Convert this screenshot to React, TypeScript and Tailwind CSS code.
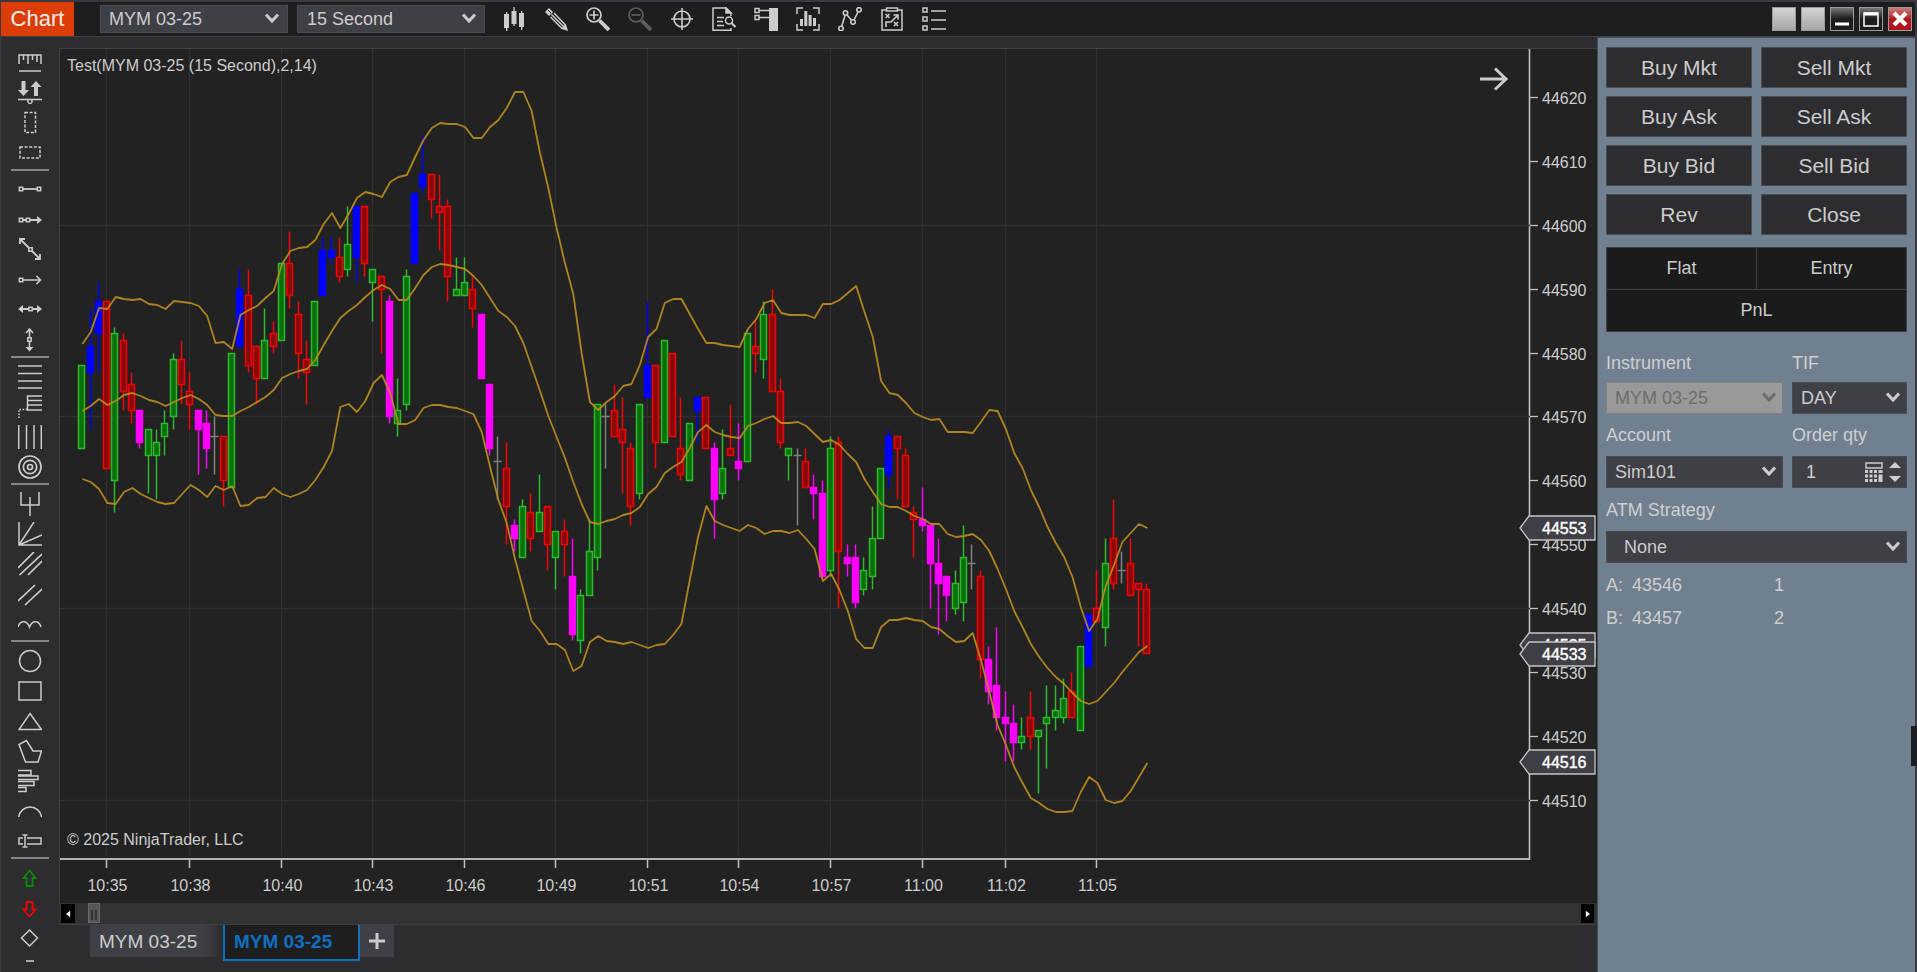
import type { ReactNode } from "react";

type Candle = [kind: "g" | "r" | "b" | "m" | "d", high: number, top: number, bottom: number, low: number];

// Prices are ticks above 44500: high, body top, body bottom, low.
const CANDLES: Candle[] = [
  ["g", 78, 78, 65, 65], ["b", 87, 81, 77, 68], ["b", 91, 88, 83, 77], ["r", 88, 88, 62, 62], ["g", 84, 83, 60, 55],
  ["r", 83, 82, 74, 71], ["r", 77, 75, 71, 69], ["m", 71, 71, 66, 65], ["g", 68, 68, 64, 58], ["g", 68, 66, 64, 57],
  ["g", 71, 69, 67, 64], ["g", 80, 79, 70, 68], ["r", 82, 79, 75, 72], ["r", 77, 74, 72, 68], ["m", 71, 71, 68, 61],
  ["m", 71, 69, 65, 62], ["d", 70, 67, 67, 61], ["r", 67, 67, 60, 56], ["g", 80, 80, 59, 59], ["b", 93, 90, 81, 81],
  ["r", 93, 89, 78, 77], ["r", 81, 81, 76, 72], ["g", 87, 82, 76, 76], ["r", 85, 83, 81, 80], ["g", 94, 94, 82, 82],
  ["r", 99, 94, 89, 87], ["r", 88, 86, 80, 76], ["r", 82, 79, 77, 72], ["g", 88, 88, 78, 78], ["b", 98, 96, 89, 89],
  ["b", 98, 96, 95, 94], ["r", 98, 95, 92, 91], ["g", 103, 97, 93, 92], ["b", 103, 103, 95, 91], ["r", 103, 103, 94, 92],
  ["g", 93, 93, 91, 85], ["r", 92, 92, 90, 80], ["m", 89, 88, 70, 69], ["g", 76, 71, 69, 67], ["g", 93, 92, 72, 71],
  ["b", 105, 105, 94, 94], ["b", 114, 108, 106, 105], ["r", 108, 108, 104, 101], ["r", 108, 103, 102, 96], ["r", 104, 103, 92, 88],
  ["g", 95, 90, 89, 89], ["g", 95, 91, 89, 89], ["r", 92, 90, 87, 84], ["m", 86, 86, 76, 76], ["m", 75, 75, 65, 64],
  ["d", 67, 63, 63, 57], ["r", 66, 62, 56, 50], ["m", 54, 53, 51, 49], ["g", 57, 56, 48, 48], ["r", 58, 55, 51, 49],
  ["g", 61, 55, 52, 52], ["r", 56, 56, 50, 46], ["g", 52, 52, 48, 43], ["r", 54, 52, 50, 45], ["m", 51, 45, 36, 35],
  ["g", 43, 42, 35, 33], ["g", 54, 49, 42, 42], ["g", 72, 72, 48, 46], ["d", 72, 70, 70, 62], ["r", 75, 71, 67, 67],
  ["r", 73, 68, 66, 58], ["r", 66, 65, 56, 53], ["g", 72, 72, 58, 57], ["b", 88, 78, 73, 73], ["r", 78, 78, 66, 62],
  ["g", 82, 82, 66, 66], ["r", 80, 80, 67, 67], ["r", 73, 65, 61, 60], ["g", 69, 69, 60, 60], ["b", 73, 73, 71, 66],
  ["r", 73, 73, 65, 65], ["m", 66, 65, 57, 51], ["g", 68, 62, 58, 57], ["r", 72, 65, 64, 64], ["m", 69, 63, 62, 60],
  ["g", 83, 83, 63, 63], ["r", 85, 81, 80, 77], ["g", 88, 86, 79, 76], ["r", 90, 86, 74, 74], ["r", 76, 74, 66, 65],
  ["g", 65, 65, 64, 60], ["d", 65, 64, 64, 53], ["r", 65, 63, 59, 59], ["m", 61, 59, 58, 54], ["m", 60, 58, 45, 45],
  ["g", 67, 65, 46, 45], ["r", 67, 66, 49, 40], ["m", 50, 48, 47, 45], ["m", 50, 48, 41, 40], ["g", 48, 46, 43, 42],
  ["g", 56, 51, 45, 43], ["g", 62, 62, 51, 51], ["b", 68, 67, 61, 59], ["r", 67, 67, 65, 57], ["r", 65, 64, 56, 56],
  ["r", 56, 55, 54, 48], ["m", 59, 54, 53, 52], ["m", 53, 53, 47, 40], ["m", 51, 47, 44, 36], ["m", 45, 45, 42, 38],
  ["g", 46, 44, 40, 39], ["g", 53, 48, 41, 38], ["d", 50, 47, 47, 43], ["r", 46, 45, 32, 29], ["m", 34, 32, 27, 25],
  ["m", 37, 28, 23, 21], ["m", 27, 23, 22, 16], ["m", 25, 22, 19, 16], ["g", 23, 20, 19, 18], ["r", 27, 23, 20, 18],
  ["g", 21, 21, 20, 11], ["g", 28, 23, 22, 15], ["g", 28, 24, 23, 21], ["g", 29, 26, 23, 22], ["r", 30, 27, 23, 23],
  ["g", 34, 34, 21, 21], ["b", 39, 39, 31, 31], ["r", 46, 40, 38, 38], ["g", 51, 47, 37, 34], ["r", 57, 51, 44, 43],
  ["d", 49, 46, 46, 44], ["r", 51, 47, 42, 42], ["r", 44, 44, 43, 34], ["r", 44, 43, 33, 33],
];

const UPPER = [
  344, 332, 308, 309, 297, 299, 300, 299, 304, 305, 309, 301, 302, 303, 306, 316, 343, 342, 349, 315, 310, 306, 298, 291, 264,
  251, 248, 247, 240, 224, 213, 228, 214, 198, 192, 194, 197, 182, 177, 175, 157, 140, 128, 123, 124, 124, 127, 138, 138, 127,
  120, 108, 92, 92, 111, 153, 188, 228, 263, 294, 353, 402, 410, 402, 396, 386, 384, 365, 337, 329, 303, 299, 299, 314, 329,
  343, 343, 345, 346, 347, 329, 319, 303, 300, 313, 315, 315, 315, 318, 304, 304, 300, 293, 286, 312, 337, 381, 393, 395, 403,
  413, 417, 420, 419, 432, 432, 432, 433, 422, 410, 411, 429, 453, 468, 490, 507, 527, 543, 557, 577, 607, 631, 619, 586, 565,
  542, 533, 524, 528,
];
const MIDDLE = [
  411, 406, 399, 405, 401, 395, 393, 396, 400, 402, 406, 402, 398, 395, 399, 405, 415, 416, 416, 411, 407, 402, 397, 390, 378,
  374, 371, 369, 360, 345, 331, 318, 311, 305, 297, 290, 285, 289, 300, 300, 288, 275, 267, 264, 265, 267, 269, 276, 285, 298,
  311, 317, 326, 343, 367, 391, 416, 437, 458, 482, 504, 522, 524, 521, 519, 515, 513, 507, 494, 487, 473, 467, 462, 448, 432,
  425, 432, 435, 437, 438, 426, 423, 419, 416, 423, 423, 422, 426, 434, 442, 440, 445, 454, 462, 479, 492, 504, 507, 507, 511,
  516, 519, 524, 524, 534, 537, 536, 534, 540, 551, 569, 589, 611, 627, 644, 657, 668, 677, 684, 693, 701, 704, 701, 692, 683,
  672, 662, 652, 646,
];
const LOWER = [
  479, 482, 489, 503, 504, 492, 488, 494, 498, 502, 504, 503, 494, 485, 490, 497, 486, 490, 486, 506, 505, 498, 497, 488, 494,
  497, 494, 490, 480, 467, 451, 407, 404, 412, 401, 383, 375, 393, 424, 424, 420, 408, 405, 405, 407, 408, 411, 414, 432, 467,
  500, 523, 559, 590, 621, 631, 644, 644, 650, 671, 666, 642, 636, 641, 642, 644, 642, 645, 648, 645, 644, 635, 624, 580, 537,
  506, 521, 525, 528, 531, 525, 528, 534, 531, 531, 533, 530, 539, 549, 581, 574, 590, 611, 639, 648, 648, 627, 620, 620, 618,
  620, 621, 627, 629, 636, 642, 641, 633, 660, 692, 725, 745, 767, 783, 798, 803, 809, 812, 812, 811, 792, 777, 783, 800, 803,
  801, 791, 777, 763,
];

const TIMES: [number, string][] = [
  [3, "10:35"], [13, "10:38"], [24, "10:40"], [35, "10:43"], [46, "10:46"], [57, "10:49"],
  [68, "10:51"], [79, "10:54"], [90, "10:57"], [101, "11:00"], [111, "11:02"], [122, "11:05"],
];
const PRICES = [120, 110, 100, 90, 80, 70, 60, 50, 40, 30, 20, 10];

const HEADER = 49;
const barX = (i: number) => Math.floor(21.7 + 8.32 * i) + 0.5;
const priceY = (p: number) => Math.floor(751.3 - (p - 10) * 6.39) + 0.5;
const linePoints = (ys: number[]) => ys.map((y, i) => `${22.4 + 8.32 * i},${y - HEADER}`).join(" ");

const STROKE = { g: "#2db82d", r: "#f80000", b: "#0000ff", m: "#ff00ff", d: "#808080" };
const FILL = { g: "#0a700a", r: "#860a0a", b: "#0000ff", m: "#ff00ff", d: "#808080" };

function Bars() {
  return (
    <g>
      {CANDLES.map(([kind, high, top, bottom, low], i) => {
        const x = barX(i);
        const color = STROKE[kind];
        return (
          <g key={i} stroke={color} strokeWidth={1.5}>
            {high > top && <line x1={x} x2={x} y1={priceY(high)} y2={priceY(top)} />}
            {low < bottom && <line x1={x} x2={x} y1={priceY(bottom)} y2={priceY(low)} />}
            {kind === "d" ? (
              <line x1={x - 4} x2={x + 4} y1={priceY(top)} y2={priceY(top)} />
            ) : (
              <rect x={x - 3} y={priceY(top)} width={6} height={priceY(bottom) - priceY(top)} fill={FILL[kind]} />
            )}
          </g>
        );
      })}
    </g>
  );
}

function Plot() {
  return (
    <svg className="block h-full w-full" aria-label="Price chart">
      <g stroke="#303030" strokeWidth={1.3}>
        {TIMES.map(([i]) => (
          <line key={i} x1={barX(i)} x2={barX(i)} y1={0} y2={806} />
        ))}
        {[100, 70, 40, 10].map((p) => (
          <line key={p} x1={0} x2="100%" y1={priceY(p)} y2={priceY(p)} />
        ))}
      </g>
      <Bars />
      <g fill="none" stroke="#b98b20" strokeWidth={1.8} strokeLinejoin="round" opacity={0.92}>
        <polyline points={linePoints(UPPER)} />
        <polyline points={linePoints(MIDDLE)} />
        <polyline points={linePoints(LOWER)} />
      </g>
    </svg>
  );
}

function PriceTag({ y, label }: { y: number; label: string }) {
  return (
    <g>
      <path d={`M-10 ${y}L-1 ${y - 12}H65V${y + 12}H-1Z`} fill="#3f3f46" stroke="#c4c4c4" strokeWidth={1.3} />
      <text x={12} y={y + 6} fill="#ffffff" stroke="#ffffff" strokeWidth={0.4}>{label}</text>
    </g>
  );
}

function PriceAxis() {
  return (
    <svg className="block h-full w-[67px] shrink-0 overflow-visible text-[16px]" aria-label="Price axis">
      <line x1={-0.5} x2={-0.5} y1={0} y2="100%" stroke="#c0c0c0" strokeWidth={1.6} />
      {PRICES.map((p) => (
        <g key={p}>
          <line x1={0} x2={8} y1={priceY(p)} y2={priceY(p)} stroke="#c0c0c0" strokeWidth={1.3} />
          <text x={12} y={priceY(p) + 6} fill="#cccccc">{44500 + p}</text>
        </g>
      ))}
      <PriceTag y={479} label="44553" />
      <PriceTag y={596} label="44535" />
      <PriceTag y={605} label="44533" />
      <PriceTag y={713} label="44516" />
    </svg>
  );
}

function TimeAxis() {
  return (
    <svg className="block h-[43px] w-full text-[16px]" aria-label="Time axis">
      {TIMES.map(([i, label]) => (
        <g key={i}>
          <line x1={barX(i)} x2={barX(i)} y1={0} y2={8} stroke="#c0c0c0" strokeWidth={1.5} />
          <text x={barX(i) + 1} y={31} fill="#cccccc" textAnchor="middle">{label}</text>
        </g>
      ))}
    </svg>
  );
}

function Chevron({ className = "" }: { className?: string }) {
  return (
    <svg viewBox="0 0 14 10" className={`pointer-events-none absolute h-[10px] w-[14px] ${className}`} aria-hidden="true">
      <path d="M1 1.5L7 8L13 1.5" fill="none" stroke="currentColor" strokeWidth={3} />
    </svg>
  );
}

function Dropdown({ label, value, box, text, chevron = "right-[7px] top-[10px]", disabled = false }: { label: string; value: string; box: string; text: string; chevron?: string; disabled?: boolean }) {
  return (
    <div className={`relative ${box}`}>
      <select
        aria-label={label}
        id={label}
        disabled={disabled}
        defaultValue={value}
        className={`h-full w-full appearance-none border text-[18px] outline-none disabled:opacity-100 ${text} ${
          disabled ? "border-[#808080] bg-[#999999] text-[#6d6d6d]" : "border-[#4b4b52] bg-[#3f3f46] text-[#cccccc]"
        }`}
      >
        <option>{value}</option>
      </select>
      <Chevron className={`${chevron} ${disabled ? "text-[#6d6d6d]" : "text-[#cccccc]"}`} />
    </div>
  );
}

function Icon({ children, className = "" }: { children: ReactNode; className?: string }) {
  return (
    <svg viewBox="0 0 24 24" className={`h-6 w-6 ${className}`} fill="none" stroke="currentColor" strokeWidth={1.5} aria-hidden="true">
      {children}
    </svg>
  );
}

const TOOLBAR: [string, ReactNode][] = [
  ["Chart style", <g fill="currentColor" stroke="none"><path d="M2 7h5v14H2zM9.500 4h5v13h-5zM17 6h5v14h-5z" /><path d="M4 5h1.300v19H4zM11.400 0h1.300v19h-1.300zM19 4h1.300v19H19z" /></g>],
  ["Drawing tools", <g><path d="M1 5L5 1L9 5L5 9Z" fill="currentColor" stroke="none" /><path d="M6.500 10L18 21.500M10 6L21.500 18M7.500 7.500L19.500 19.500" /><path d="M4 3L7 6" stroke="#1e1e1e" strokeWidth={1} /><path d="M24 24L21.800 16.800L16.800 21.800Z" fill="currentColor" stroke="none" /></g>],
  ["Zoom in", <g><circle cx="8" cy="8" r="7" strokeWidth={1.700} /><path d="M8 3.500V12.500M3.500 8H12.500" strokeWidth={1.700} /><path d="M13.500 13.500L23 23" strokeWidth={3.800} /></g>],
  ["Zoom out", <g><circle cx="8" cy="8" r="7" strokeWidth={1.700} /><path d="M3.500 8H12.500" strokeWidth={1.700} /><path d="M13.500 13.500L23 23" strokeWidth={3.800} /></g>],
  ["Cross hair", <g strokeWidth={1.600}><circle cx="12" cy="12" r="8" /><path d="M12 1V23M1 12H23" /></g>],
  ["Data box", <g><path d="M19 21V23.200H1V1H14L19 6V9" /><path d="M14 1V6H19Z" fill="currentColor" /><path d="M5 10.500H12M5 14.500H11M5 18.500H12" /><circle cx="17" cy="13.500" r="3.500" /><path d="M19.500 16L23.500 20" strokeWidth={2.200} /></g>],
  ["Chart trader", <g><path d="M15 1H24V24H15Z" fill="currentColor" stroke="none" /><path d="M1 1.500H5V5.500H1ZM1 8.500H5V12.500H1ZM5 3.500H15M5 10.500H15" /></g>],
  ["Data series", <g><path d="M1 7V1H7M17 1H23V7M23 17V23H17M7 23H1V17" /><path d="M4 12H7V19H4ZM8.300 4H11.300V19H8.300ZM12.600 8H15.600V19H12.600ZM17 11H20V19H17Z" fill="currentColor" stroke="none" /></g>],
  ["Indicators", <g strokeWidth={1.600}><circle cx="3" cy="21.500" r="2.200" /><circle cx="7.500" cy="6" r="2.200" /><circle cx="15" cy="15" r="2.200" /><circle cx="21" cy="2.800" r="2.200" /><path d="M3.700 19.200L7 8.400M9 8L13.600 13.200M16 13L20 5" /></g>],
  ["Strategies", <g><path d="M6 3H2V23H22V3H18" /><path d="M6.500 1H17.500V4H6.500Z" /><path d="M5.500 7L9.500 11M9.500 7L5.500 11M14 15L18 19M18 15L14 19" /><path d="M6 20V15H11L17 9M13.500 8H18V12.500" strokeWidth={1.600} /></g>],
  ["Properties", <g><path d="M1 1H5V5H1ZM1 10H5V14H1ZM1 19H5V23H1Z" /><path d="M9 4H24M9 13H24M9 22H24" /></g>],
];

const box = (x: number, y: number) => <rect x={x - 1.7} y={y - 1.7} width={3.4} height={3.4} />;
const solid = (d: string) => <path d={d} fill="currentColor" stroke="none" />;

const TOOLS: [string, ReactNode, string?][][] = [
  [
    ["Ruler", <g><path d="M1 13V4H23V13M1 20H23M5.500 4V9M10 4V13M14.500 4V9M19 4V11" /></g>],
    ["Risk reward", <g><path d="M0 18.500H24" /><path d="M10 18.500Q9.500 22.500 12 22.500Q14.500 22.500 14 18.500" />{solid("M3.5 0H7.500V9H11L5.500 15L0 9H3.500Z")}{solid("M16 15H20V6H23.500L18 0L12.500 6H16Z")}</g>],
    ["Region highlight X", <path d="M7 1.500H17.500V21.500H7Z" strokeDasharray="3 1.600" />],
    ["Region highlight Y", <path d="M2 6H22V17H2Z" strokeDasharray="3 1.600" />],
  ],
  [
    ["Line", <g>{box(3, 11)}{box(21, 11)}<path d="M5 11H19" strokeWidth={1.800} /></g>],
    ["Ray", <g>{box(3, 12)}{box(10, 12)}<path d="M5 12H8.500M12 12H20" strokeWidth={1.800} />{solid("M19 8L24 12L19 16Z")}</g>],
    ["Extended line", <g>{box(12.5, 11.5)}<path d="M3 2L11 10M14 13L21 20M2 6V1H7M22 16V21H17" strokeWidth={1.800} /></g>],
    ["Arrow line", <g>{box(3, 12)}<path d="M5 12H22M18.500 8L22.500 12L18.500 16" strokeWidth={1.600} /></g>],
    ["Horizontal line", <g>{box(12.5, 11)}<path d="M4 11H10.500M14.500 11H20" strokeWidth={1.800} />{solid("M0 11L5 7V15ZM24 11L19 7V15Z")}</g>],
    ["Vertical line", <g>{box(11.5, 11.5)}<path d="M11.500 2V9.500M11.500 13.500V20M8 5L11.500 1L15 5" strokeWidth={1.600} />{solid("M11.500 23.500L7.500 19H15.500Z")}</g>],
  ],
  [
    ["Fibonacci retracements", <path d="M0 1H24M0 8.500H24M0 16H24M0 23H24" />],
    ["Fibonacci extensions", <g><path d="M24 1H9.500V15H24M9.500 5.500H24M9.500 10H24" /><path d="M9 14.500H1V24" strokeDasharray="1.500 1.500" /></g>],
    ["Fibonacci time extensions", <path d="M.7 0V24M8.500 0V24M16 0V24M23.300 0V24" />],
    ["Fibonacci circle", <g strokeWidth={1.700}><circle cx="12" cy="12" r="11" /><circle cx="12" cy="12" r="6.700" /><circle cx="12" cy="12" r="2.500" /></g>],
  ],
  [
    ["Andrews pitchfork", <g><path d="M3 0V13H21V0" /><path d="M12 5V24" opacity={0.75} strokeWidth={2} /></g>],
    ["Gann fan", <path d="M1 0V23H24M1 23L16 0M1 23L24 13" />],
    ["Regression channel", <path d="M0 16L16 0M1.500 23L24 2M10 23L24 9" strokeWidth={1.700} />],
    ["Trend channel", <path d="M0 19L17 3M7 23L24 7" strokeWidth={1.700} />],
    ["Path", <path d="M0 15C2 8 9 8 11.500 15C14 8 21 8 23 15" />],
  ],
  [
    ["Ellipse", <circle cx="12" cy="12" r="10.500" />],
    ["Rectangle", <path d="M1 3H23V21H1Z" />],
    ["Triangle", <path d="M12 4.500L23.500 20.500H1Z" />],
    ["Polygon", <path d="M1 5.500L8.500 1.500L15 12H23.500L20 23H7.500Z" />],
    ["Volume profile", <path d="M0 1.500H13V6H0M0 7H20V10.500H0M0 12.500H16V16.500H0M0 18.500H8V22.500H0" />],
    ["Arc", <path d="M.700 18A11.500 11.500 0 0 1 23.500 18" />],
    ["Text", <g><path d="M5 9H1V15H5M9 9H23V15H9M7 6V18M4.500 6H9.500M4.500 18H9.500" /></g>],
  ],
  [
    ["Arrow up", <path d="M11.500 4.500L17.500 12H14.500V20H8.500V12H5.500Z" strokeWidth={1.800} />, "text-[#0a8a0a]"],
    ["Arrow down", <path d="M11.500 20.500L17.500 13.500H14.500V6H8.500V13.500H5.500Z" strokeWidth={1.800} />, "text-[#f00000]"],
    ["Diamond", <path d="M11.500 4L19.500 12L11.500 20L3.500 12Z" />],
  ],
];

function Caption({ children, htmlFor }: { children: ReactNode; htmlFor: string }) {
  return <label htmlFor={htmlFor} className="block text-[18px] leading-[22px] text-[#cfcfcf]">{children}</label>;
}

const WIN = "flex h-6 w-6 items-center justify-center border border-[#9a9a9a]";

export default function App() {
  return (
    <div className="flex h-screen flex-col overflow-hidden border-l border-r-2 border-t-2 border-[#3a3a40] bg-[#2d2d30] font-['Liberation_Sans',Arial,sans-serif] text-[#cccccc]">
      <header className="flex h-[35px] shrink-0 items-center border-b border-[#3f3f46] bg-[#1e1e1e]">
        <h1 className="flex h-full w-[73px] items-center justify-center bg-[#dc3c05] text-[22px] leading-none text-[#f0f0f0]">Chart</h1>
        <div className="ml-[26px] flex gap-[9px]">
          <Dropdown label="Chart instrument" value="MYM 03-25" box="h-[28px] w-[188px]" text="pl-[8px]" chevron="right-[9px] top-[8px]" />
          <Dropdown label="Interval" value="15 Second" box="h-[28px] w-[188px]" text="pl-[9px]" chevron="right-[9px] top-[8px]" />
        </div>
        <nav className="ml-[8px] flex" aria-label="Chart toolbar">
          {TOOLBAR.map(([name, art]) => (
            <button key={name} aria-label={name} className={`flex h-[30px] w-[42px] items-center justify-center ${name === "Zoom out" ? "text-[#5c5c5c]" : "text-[#cccccc]"}`}>
              <Icon>{art}</Icon>
            </button>
          ))}
        </nav>
        <div className="ml-auto mr-[3px] flex gap-[5px]">
          <button aria-label="Link instrument" className={`${WIN} bg-linear-to-b from-[#d4d2d2] to-[#aaa6a8]`} />
          <button aria-label="Link interval" className={`${WIN} bg-linear-to-b from-[#d4d2d2] to-[#aaa6a8]`} />
          <button aria-label="Minimize" className={`${WIN} bg-linear-to-b from-[#777777] via-[#1c1c1c] to-[#1c1c1c]`}>
            <svg viewBox="0 0 22 22" className="h-full w-full"><path d="M4 16H18" stroke="#fff" strokeWidth={3} /></svg>
          </button>
          <button aria-label="Maximize" className={`${WIN} bg-linear-to-b from-[#777777] via-[#1c1c1c] to-[#1c1c1c]`}>
            <svg viewBox="0 0 22 22" className="h-full w-full" fill="none" stroke="#fff"><path d="M4 5H18V18H4Z" strokeWidth={1.500} /><path d="M4 6H18" strokeWidth={3} /></svg>
          </button>
          <button aria-label="Close window" className={`${WIN} bg-linear-to-b from-[#c87a7c] via-[#b0151c] to-[#b0151c]`}>
            <svg viewBox="0 0 22 22" className="h-full w-full"><path d="M5 5L17 17M17 5L5 17" stroke="#fff" strokeWidth={4.200} /></svg>
          </button>
        </div>
      </header>

      <div className="flex min-h-0 flex-1">
        <aside className="flex w-[58px] shrink-0 flex-col items-center pt-[11px]" aria-label="Drawing tools">
          {TOOLS.map((group, g) => (
            <div key={g} className="flex flex-col items-center">
              {g > 0 && <div className="flex h-[7px] items-start"><hr className="mt-px w-[38px] border-t-2 border-[#858587]" /></div>}
              {group.map(([name, art, tone]) => (
                <button key={name} aria-label={name} className={`flex h-[30px] w-[38px] items-center justify-center ${tone ?? "text-[#cccccc]"}`}>
                  <Icon>{art}</Icon>
                </button>
              ))}
            </div>
          ))}
          <div className="mt-[7px] h-[2px] w-2 bg-[#aaaaaa]" />
        </aside>

        <main className="flex min-w-0 flex-1 flex-col pt-[11px]">
          <div className="flex min-h-0 flex-1 flex-col border-l border-t border-[#3f3f46] bg-[#222222]">
            <div className="flex min-h-0 flex-1">
              <div className="relative min-w-0 flex-1 border-b-2 border-[#b4b4b4]">
                <Plot />
                <p className="absolute left-[7px] top-[7px] text-[16px] leading-5">Test(MYM 03-25 (15 Second),2,14)</p>
                <p className="absolute bottom-[8px] left-[7px] text-[16px] leading-5">© 2025 NinjaTrader, LLC</p>
                <button aria-label="Return to current bar" className="absolute right-[21px] top-[18px] text-[#cccccc]">
                  <svg viewBox="0 0 30 24" className="block h-6 w-[30px]" fill="none" stroke="currentColor" strokeWidth={3}>
                    <path d="M1 12H27M16 1.500L27 12L16 22.500" />
                  </svg>
                </button>
              </div>
              <PriceAxis />
            </div>
            <TimeAxis />
          </div>
          <div className="relative flex h-[22px] shrink-0 items-center justify-between border-b border-[#3f3f46] bg-[#333333] pl-[2px] pr-[3px]">
            <button aria-label="Scroll left" className="flex h-[19px] w-[14px] items-center justify-center bg-black">
              <svg viewBox="0 0 6 8" className="h-2 w-[5px]"><path d="M5 0V8L0 4Z" fill="#fff" /></svg>
            </button>
            <div className="absolute left-[29px] top-0 flex h-[20px] w-[12px] items-end justify-center gap-[2px] border border-[#6a6a6a] bg-[#555555] pb-[2px]">
              <i className="h-[10px] w-[2px] bg-[#333333]" />
              <i className="h-[10px] w-[2px] bg-[#333333]" />
            </div>
            <button aria-label="Scroll right" className="flex h-[19px] w-[13px] items-center justify-center bg-black">
              <svg viewBox="0 0 6 8" className="h-2 w-[5px]"><path d="M1 0V8L6 4Z" fill="#fff" /></svg>
            </button>
          </div>
          <div className="flex h-[47px] shrink-0 items-start pl-[31px]" role="tablist">
            <button role="tab" aria-selected="false" className="h-[32px] w-[133px] bg-[#3f3f46] bg-linear-to-r from-[#3f3f46] from-85% to-[#2d2d30] pl-[9px] text-left text-[19px] leading-none">MYM 03-25</button>
            <button role="tab" aria-selected="true" className="h-[36px] w-[137px] border-x-2 border-b-2 border-[#0e70c0] bg-[#1e1e1e] pb-[2px] pl-[9px] text-left text-[19px] font-bold leading-none text-[#0e70c0]">MYM 03-25</button>
            <button aria-label="Add tab" className="flex h-[32px] w-[34px] items-center justify-center bg-[#3f3f46]">
              <svg viewBox="0 0 16 16" className="h-4 w-4"><path d="M8 0V16M0 8H16" stroke="#cccccc" strokeWidth={3} /></svg>
            </button>
          </div>
        </main>

        <section className="w-[318px] shrink-0 border-l border-t border-[#4b4b52] bg-[#708090] px-[8px] pt-[9px]" aria-label="Chart trader">
          <div className="grid grid-cols-2 gap-x-[9px] gap-y-[8px]">
            {["Buy Mkt", "Sell Mkt", "Buy Ask", "Sell Ask", "Buy Bid", "Sell Bid", "Rev", "Close"].map((name) => (
              <button key={name} className="h-[41px] border border-[#4b4b52] bg-[#2d2d30] text-[21px] leading-none">{name}</button>
            ))}
          </div>
          <div className="mt-[12px] grid grid-cols-2 gap-px border border-[#3f3f46] bg-[#3f3f46] text-center text-[18px] leading-[41px]">
            <div className="bg-[#1b1b1b]">Flat</div>
            <div className="bg-[#1b1b1b]">Entry</div>
            <div className="col-span-2 bg-[#1b1b1b]">PnL</div>
          </div>
          <div className="mt-[20px] grid grid-cols-[177px_1fr] gap-x-[9px]">
            <Caption htmlFor="Instrument">Instrument</Caption>
            <Caption htmlFor="TIF">TIF</Caption>
            <Dropdown label="Instrument" value="MYM 03-25" box="mt-[8px] h-[32px]" text="pl-[8px]" disabled />
            <Dropdown label="TIF" value="DAY" box="mt-[8px] h-[32px]" text="pl-[8px]" />
            <div className="mt-[10px]"><Caption htmlFor="Account">Account</Caption></div>
            <div className="mt-[10px]"><Caption htmlFor="qty">Order qty</Caption></div>
            <Dropdown label="Account" value="Sim101" box="mt-[10px] h-[32px]" text="pl-[8px]" />
            <div className="mt-[10px] flex h-[32px] items-center border border-[#4b4b52] bg-[#3f3f46]">
              <input id="qty" defaultValue="1" className="w-0 min-w-0 flex-1 bg-transparent pl-[13px] text-[18px] outline-none" />
              <button aria-label="Calculator">
                <svg viewBox="0 0 18 20" className="block h-5 w-[18px]" fill="#cccccc">
                  <path d="M1 1H17V6H1Z" fill="none" stroke="#cccccc" strokeWidth={1.400} />
                  <path d="M0 8H3V11H0ZM4.500 8H7.500V11H4.500ZM9 8H12V11H9ZM13.500 8H17.500V11H13.500ZM0 12.500H3V15.500H0ZM4.500 12.500H7.500V15.500H4.500ZM9 12.500H12V15.500H9ZM13.500 12.500H17.500V20H13.500ZM0 17H3V20H0ZM4.500 17H7.500V20H4.500ZM9 17H12V20H9Z" />
                </svg>
              </button>
              <div className="ml-[6px] mr-[5px] flex flex-col gap-[8px]">
                <button aria-label="Increase"><svg viewBox="0 0 12 6" className="block h-[6px] w-[12px]"><path d="M0 6L6 0L12 6Z" fill="#cccccc" /></svg></button>
                <button aria-label="Decrease"><svg viewBox="0 0 12 6" className="block h-[6px] w-[12px]"><path d="M0 0L6 6L12 0Z" fill="#cccccc" /></svg></button>
              </div>
            </div>
          </div>
          <div className="mt-[11px]">
            <Caption htmlFor="Strategy">ATM Strategy</Caption>
            <Dropdown label="Strategy" value="None" box="mt-[10px] h-[32px]" text="pl-[17px]" />
          </div>
          <table className="mt-[6px] w-full text-left text-[18px] leading-[33px] text-[#cfcfcf]">
            <tbody>
              <tr><th scope="row" className="w-[26px] font-normal">A:</th><td className="w-[142px]">43546</td><td>1</td></tr>
              <tr><th scope="row" className="font-normal">B:</th><td>43457</td><td>2</td></tr>
            </tbody>
          </table>
        </section>
      </div>
      <div className="absolute right-0 top-[726px] h-10 w-[6px] bg-[#1c1f1f]" />
    </div>
  );
}
